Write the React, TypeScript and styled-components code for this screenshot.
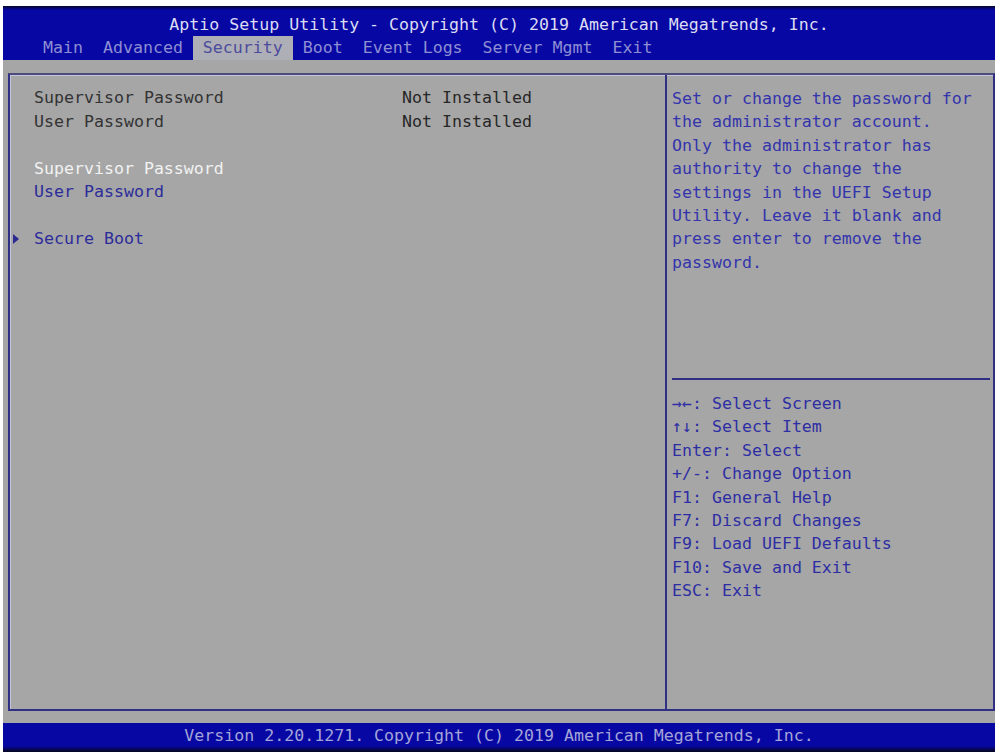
import React from "react";
import styled, { createGlobalStyle } from "styled-components";

const Global = createGlobalStyle`
  html, body { margin: 0; padding: 0; background: #ffffff; }
  body { font-family: "DejaVu Sans Mono", "Liberation Mono", monospace; }
`;

const BLUE = "#0707a4";
const GRAY = "#a6a6a6";
const LINE = "#2f2f84";

const Screen = styled.div`
  margin: 6px 0 0 3px;
  width: 992px;
  height: 746px;
  display: flex;
  flex-direction: column;
  background: ${GRAY};
  font-family: "DejaVu Sans Mono", "Liberation Mono", monospace;
  font-size: 16.6px;
`;

const Header = styled.header`
  height: 54px;
  padding-top: 8px;
  box-sizing: border-box;
  background: linear-gradient(#06062a 0, ${BLUE} 4px, ${BLUE} 100%);
  display: flex;
  flex-direction: column;
`;

const Title = styled.div`
  height: 22px;
  line-height: 22px;
  text-align: center;
  font-size: 16.6px;
  color: #dcdcf2;
  white-space: pre;
`;

const TabBar = styled.nav`
  height: 24px;
  display: flex;
  padding-left: 30px;
  align-items: stretch;
`;

const Tab = styled.span<{ $active?: boolean }>`
  line-height: 24px;
  white-space: pre;
  color: ${(p) => (p.$active ? "#4c4c9c" : "#8e8ed2")};
  background: ${(p) => (p.$active ? "#aeaeb6" : "transparent")};
`;

const Body = styled.main`
  flex: 1;
  padding: 13px 0 12px 5px;
  display: flex;
`;

const Frame = styled.div`
  flex: 1;
  display: grid;
  grid-template-columns: 655px 1fr;
  border: 2px solid ${LINE};
  border-top-color: #4c4c7c;
  box-shadow: inset 1px 1px 0 #c4c4dc;
`;

const LeftPanel = styled.section`
  padding-top: 11px;
  display: flex;
  flex-direction: column;
`;

const Row = styled.div`
  display: grid;
  grid-template-columns: 24px 368px 1fr;
  height: 23.5px;
  line-height: 23.5px;
  white-space: pre;
`;

const Marker = styled.span`
  display: flex;
  align-items: center;
  padding-left: 3px;
`;

const Triangle = styled.span`
  width: 0;
  height: 0;
  border-top: 5px solid transparent;
  border-bottom: 5px solid transparent;
  border-left: 6px solid #2a2a90;
`;

const Label = styled.span<{ $tone?: "dark" | "white" | "blue" }>`
  color: ${(p) =>
    p.$tone === "white" ? "#f2f2f2" : p.$tone === "blue" ? "#2c2c9a" : "#333333"};
`;

const Value = styled.span`
  color: #262626;
`;

const Spacer = styled.div`
  height: 23.5px;
`;

const RightPanel = styled.aside`
  border-left: 2px solid ${LINE};
  display: flex;
  flex-direction: column;
`;

const HelpSection = styled.div`
  height: 303px;
  padding: 12px 0 0 5px;
  box-sizing: border-box;
`;

const Divider = styled.hr`
  margin: 0 3px 0 5px;
  border: 0;
  height: 2px;
  background: ${LINE};
`;

const KeySection = styled.div`
  padding: 12px 0 0 5px;
`;

const HelpLine = styled.div`
  height: 23.4px;
  line-height: 23.4px;
  white-space: pre;
  color: #3434ac;
`;

const KeyLine = styled(HelpLine)`
  color: #2e2ea4;
`;

const Footer = styled.footer`
  height: 29px;
  background: linear-gradient(${BLUE} 0, ${BLUE} 23px, #05051a 29px);
  color: #a4a4d8;
  font-size: 16.6px;
  line-height: 25px;
  text-align: center;
  white-space: pre;
`;

const tabs = ["Main", "Advanced", "Security", "Boot", "Event Logs", "Server Mgmt", "Exit"];

const helpText = [
  "Set or change the password for",
  "the administrator account.",
  "Only the administrator has",
  "authority to change the",
  "settings in the UEFI Setup",
  "Utility. Leave it blank and",
  "press enter to remove the",
  "password.",
];

const keyHelp = [
  "→←: Select Screen",
  "↑↓: Select Item",
  "Enter: Select",
  "+/-: Change Option",
  "F1: General Help",
  "F7: Discard Changes",
  "F9: Load UEFI Defaults",
  "F10: Save and Exit",
  "ESC: Exit",
];

export default function App() {
  return (
    <>
      <Global />
      <Screen>
        <Header>
          <Title>Aptio Setup Utility - Copyright (C) 2019 American Megatrends, Inc.</Title>
          <TabBar>
            {tabs.map((t) => (
              <Tab key={t} $active={t === "Security"}>{` ${t} `}</Tab>
            ))}
          </TabBar>
        </Header>
        <Body>
          <Frame>
            <LeftPanel>
              <Row>
                <Marker />
                <Label>Supervisor Password</Label>
                <Value>Not Installed</Value>
              </Row>
              <Row>
                <Marker />
                <Label>User Password</Label>
                <Value>Not Installed</Value>
              </Row>
              <Spacer />
              <Row>
                <Marker />
                <Label $tone="white">Supervisor Password</Label>
              </Row>
              <Row>
                <Marker />
                <Label $tone="blue">User Password</Label>
              </Row>
              <Spacer />
              <Row>
                <Marker>
                  <Triangle />
                </Marker>
                <Label $tone="blue">Secure Boot</Label>
              </Row>
            </LeftPanel>
            <RightPanel>
              <HelpSection>
                {helpText.map((l) => (
                  <HelpLine key={l}>{l}</HelpLine>
                ))}
              </HelpSection>
              <Divider />
              <KeySection>
                {keyHelp.map((l) => (
                  <KeyLine key={l}>{l}</KeyLine>
                ))}
              </KeySection>
            </RightPanel>
          </Frame>
        </Body>
        <Footer>Version 2.20.1271. Copyright (C) 2019 American Megatrends, Inc.</Footer>
      </Screen>
    </>
  );
}
